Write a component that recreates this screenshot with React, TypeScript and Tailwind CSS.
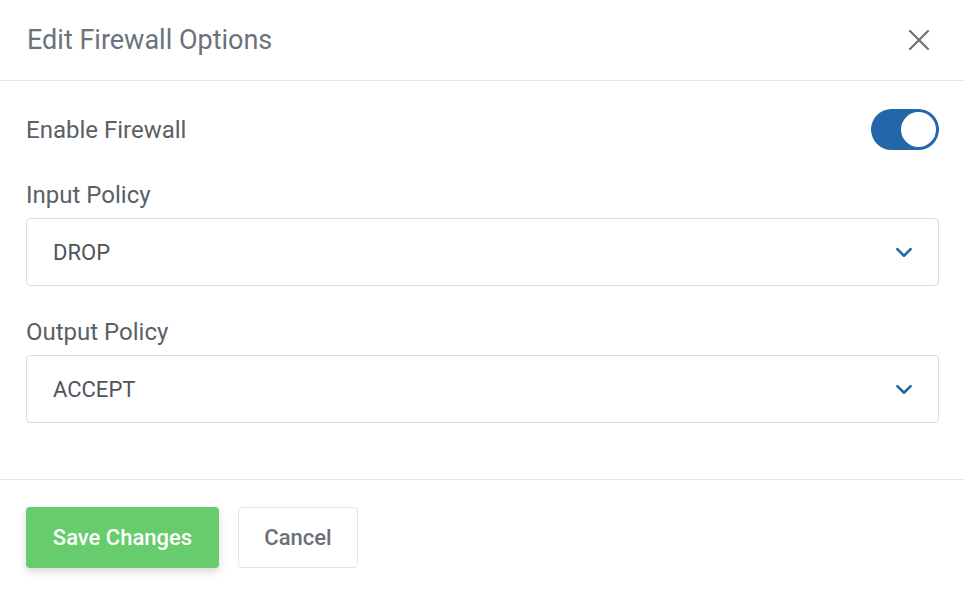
import { useState } from "react";

function Chevron() {
  return (
    <svg width="20" height="20" viewBox="0 0 24 24" fill="none" stroke="#2467a9" strokeWidth="3" strokeLinecap="round" strokeLinejoin="round">
      <path d="M4 8.5l8 8 8-8" />
    </svg>
  );
}

function PolicySelect({ label, value }: { label: string; value: string }) {
  return (
    <div>
      <label className="block text-[24px] leading-[28px] text-[#5a5f68]">{label}</label>
      <div className="mt-[9px] flex h-[68px] items-center justify-between rounded-[4px] border border-[#dcdbe6] pl-[26px] pr-[24px]">
        <span className="text-[22px] text-[#4f545c]">{value}</span>
        <Chevron />
      </div>
    </div>
  );
}

export default function App() {
  const [enabled, setEnabled] = useState(true);

  return (
    <div className="h-[596px] w-[965px] bg-white font-['Roboto',sans-serif]">
      {/* Header */}
      <div className="flex h-[81px] items-center justify-between border-b border-[#e8e8ec] pl-[27px] pr-[34px]">
        <h2 className="text-[27px] text-[#6c727a]">Edit Firewall Options</h2>
        <button className="text-[#717171]">
          <svg width="24" height="24" viewBox="0 0 24 24" fill="none" stroke="currentColor" strokeWidth="2.2" strokeLinecap="round">
            <path d="M3 3l18 18M21 3L3 21" />
          </svg>
        </button>
      </div>

      {/* Body */}
      <div className="px-[26px] pb-[56px] pt-[28px]">
        <div className="flex h-[41px] items-center justify-between">
          <span className="text-[24px] text-[#5a5f68]">Enable Firewall</span>
          <button
            onClick={() => setEnabled(!enabled)}
            className={`flex h-[41px] w-[68px] items-center rounded-full p-[3px] ${enabled ? "justify-end bg-[#2467a9]" : "justify-start bg-[#d1d5db]"}`}
          >
            <span className="h-[35px] w-[35px] rounded-full bg-white" />
          </button>
        </div>

        <div className="mt-[31px]">
          <PolicySelect label="Input Policy" value="DROP" />
        </div>
        <div className="mt-[32px]">
          <PolicySelect label="Output Policy" value="ACCEPT" />
        </div>
      </div>

      {/* Footer */}
      <div className="flex gap-[19px] border-t border-[#e8e8ec] px-[26px] pt-[27px]">
        <button className="h-[61px] w-[193px] rounded-[4px] bg-[#66cc6c] text-[22px] font-medium text-white shadow-[0_4px_8px_rgba(0,0,0,0.15)]">
          Save Changes
        </button>
        <button className="h-[61px] w-[120px] rounded-[4px] border border-[#e3e3ea] bg-white text-[22px] font-medium text-[#6b7078]">
          Cancel
        </button>
      </div>
    </div>
  );
}
